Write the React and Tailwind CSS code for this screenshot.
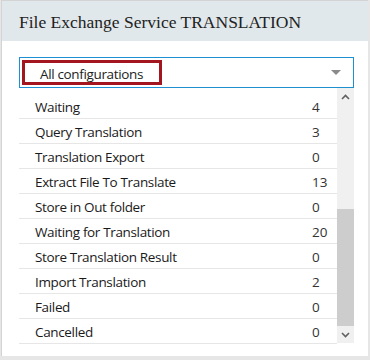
const rows = [
  ["Waiting", "4"],
  ["Query Translation", "3"],
  ["Translation Export", "0"],
  ["Extract File To Translate", "13"],
  ["Store in Out folder", "0"],
  ["Waiting for Translation", "20"],
  ["Store Translation Result", "0"],
  ["Import Translation", "2"],
  ["Failed", "0"],
  ["Cancelled", "0"],
];

const App = () => {
  return (
    <div className="w-[370px] h-[360px] bg-[#e6e6e6] pl-px overflow-hidden">
      <div className="w-[367px] h-[356px] bg-white border-t border-l border-[#d4d4d4] flex flex-col">
        {/* Header */}
        <div className="h-[40px] bg-[#e1e8eb] flex items-center pl-[17px] pt-[2px]">
          <h2 className="text-[17.5px] text-[#222] font-['Liberation_Serif',serif]">
            File Exchange Service TRANSLATION
          </h2>
        </div>

        {/* Body */}
        <div className="pl-[17px] pr-[14px] pt-[16px] font-['Open_Sans',sans-serif] tracking-[-0.35px]">
          <div className="relative h-[31px] border border-[#1e8fd2] flex items-center pl-[20px] pr-[10px] pt-[3px]">
            <span className="text-[13.5px] text-[#222] flex-1">All configurations</span>
            <svg width="10" height="5" viewBox="0 0 10 5" className="mr-[2px] -mt-[3px]">
              <path d="M0 0 L10 0 L5 5 Z" fill="#8a8a8a" />
            </svg>
            <div className="absolute left-[2px] top-[2px] w-[140px] h-[25px] border-[3px] border-[#a3161f]" />
          </div>

          <div className="flex h-[256px]">
            <div className="flex-1 pt-[6px]">
              {rows.map(([name, n]) => (
                <div key={name} className="h-[25px] border-b border-[#e6e6e6] flex items-center pt-[3px] text-[13.5px] text-[#1a1a1a]">
                  <span className="flex-1 pl-4">{name}</span>
                  <span className="w-[25px] text-[#333] tracking-normal">{n}</span>
                </div>
              ))}
            </div>
            {/* Scrollbar */}
            <div className="w-[17px] h-[255px] bg-[#f0f0f0] flex flex-col">
              <div className="h-[17px] flex items-center justify-center">
                <svg width="9" height="6" viewBox="0 0 9 6">
                  <path d="M1 5 L4.5 1.5 L8 5" fill="none" stroke="#606060" strokeWidth="1.6" />
                </svg>
              </div>
              <div className="flex-1" />
              <div className="h-[117px] bg-[#cdcdcd]" />
              <div className="h-[17px] flex items-center justify-center">
                <svg width="9" height="6" viewBox="0 0 9 6">
                  <path d="M1 1 L4.5 4.5 L8 1" fill="none" stroke="#606060" strokeWidth="1.6" />
                </svg>
              </div>
            </div>
          </div>
        </div>
      </div>
    </div>
  );
};

export default App;
